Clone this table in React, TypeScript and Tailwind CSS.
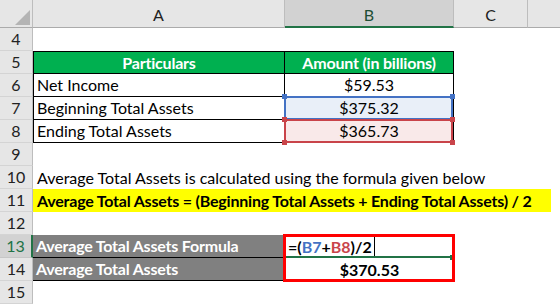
const font = "font-['Lato','Liberation_Sans',sans-serif]"

const RowHead = ({ n, active = false }: { n: number; active?: boolean }) => (
  <div
    className={`flex h-full w-[33px] shrink-0 items-center justify-center border-b border-r text-[16px] ${
      active
        ? "border-b-[#c6c6c6] border-r-2 border-r-[#217346] bg-[#d2d2d2] text-[#217346]"
        : "border-b-[#d4d4d4] border-r-[#bdbdbd] bg-[#e6e6e6] text-[#222]"
    }`}
  >
    {n}
  </div>
)

const Handle = ({ pos, color }: { pos: string; color: string }) => (
  <span className={`absolute h-[5px] w-[5px] ${pos} ${color}`} />
)

export default function App() {
  return (
    <div className={`h-[305px] w-[560px] overflow-hidden bg-white ${font} text-[16px] text-black`}>
      {/* column headers */}
      <div className="flex h-[28px] bg-[#e6e6e6]">
        <div className="relative w-[33px] shrink-0 border-b border-r border-b-[#ababab] border-r-[#bdbdbd]">
          <svg className="absolute left-[15px] top-[10px]" width="15" height="15" viewBox="0 0 15 15">
            <polygon points="15,0 15,15 0,15" fill="#b4b4b4" />
          </svg>
        </div>
        <div className="flex w-[252px] items-center justify-center border-b border-r border-b-[#ababab] border-r-[#bdbdbd] pt-[3px] text-[#222]">
          A
        </div>
        <div className="flex w-[169px] items-center justify-center border-b-2 border-r border-b-[#217346] border-r-[#bdbdbd] bg-[#d2d2d2] pt-[3px] text-[#1f4e35]">
          B
        </div>
        <div className="flex w-[74px] items-center justify-center border-b border-r border-b-[#ababab] border-r-[#bdbdbd] pt-[3px] text-[#222]">
          C
        </div>
        <div className="flex-1 border-b border-b-[#ababab]" />
      </div>

      {/* row 4 */}
      <div className="flex h-[23px]">
        <RowHead n={4} />
      </div>

      {/* row 5 */}
      <div className="flex h-[23px]">
        <RowHead n={5} />
        <div className="flex w-[252px] items-center justify-center border border-black bg-[#00b050] font-bold tracking-[-0.2px] text-white">
          Particulars
        </div>
        <div className="flex w-[169px] items-center justify-center border-y border-r border-black bg-[#00b050] font-bold tracking-[-0.2px] text-white">
          Amount (in billions)
        </div>
      </div>

      {/* row 6 */}
      <div className="flex h-[23px]">
        <RowHead n={6} />
        <div className="flex w-[252px] items-center border-x border-b border-black pl-[3px]">Net Income</div>
        <div className="flex w-[169px] items-center justify-center border-b border-r border-black">$59.53</div>
      </div>

      {/* row 7 */}
      <div className="flex h-[23px]">
        <RowHead n={7} />
        <div className="flex w-[252px] items-center border-x border-b border-black pl-[3px]">Beginning Total Assets</div>
        <div className="relative flex w-[169px] items-center justify-center border-b border-r border-black bg-[#e9eff8]">
          $375.32
          <div className="absolute -left-px -top-px h-[24px] w-[169px] border-2 border-[#4472c4]" />
          <Handle pos="-left-[3px] -top-[3px]" color="bg-[#4472c4]" />
          <Handle pos="-right-[2px] -top-[3px]" color="bg-[#4472c4]" />
        </div>
      </div>

      {/* row 8 */}
      <div className="flex h-[23px]">
        <RowHead n={8} />
        <div className="flex w-[252px] items-center border-x border-b border-black pl-[3px]">Ending Total Assets</div>
        <div className="relative flex w-[169px] items-center justify-center border-b border-r border-black bg-[#f9e9e9]">
          $365.73
          <div className="absolute -left-px -top-px h-[24px] w-[169px] border-2 border-[#c9444a]" />
          <Handle pos="-left-[3px] -top-[3px]" color="bg-[#c9444a]" />
          <Handle pos="-right-[2px] -top-[3px]" color="bg-[#c9444a]" />
          <Handle pos="-left-[3px] -bottom-[3px]" color="bg-[#c9444a]" />
          <Handle pos="-right-[2px] -bottom-[3px]" color="bg-[#c9444a]" />
        </div>
      </div>

      {/* row 9 */}
      <div className="flex h-[23px]">
        <RowHead n={9} />
      </div>

      {/* row 10 */}
      <div className="flex h-[23px]">
        <RowHead n={10} />
        <div className="flex items-center whitespace-nowrap pl-[4px]">
          Average Total Assets is calculated using the formula given below
        </div>
      </div>

      {/* row 11 */}
      <div className="flex h-[23px]">
        <RowHead n={11} />
        <div className="flex w-[518px] items-center whitespace-nowrap bg-[#ffff00] pl-[4px] font-bold tracking-[-0.2px]">
          Average Total Assets = (Beginning Total Assets + Ending Total Assets) / 2
        </div>
      </div>

      {/* row 12 */}
      <div className="flex h-[23px]">
        <RowHead n={12} />
      </div>

      {/* row 13 */}
      <div className="flex h-[23px]">
        <RowHead n={13} active />
        <div className="flex w-[252px] items-center border-b border-r border-black bg-[#808080] pl-[3px] font-bold tracking-[-0.2px] text-white">
          Average Total Assets Formula
        </div>
        <div className="relative flex w-[169px] items-center pl-[3px] font-bold">
          <span>=(</span>
          <span className="text-[#4472c4]">B7</span>
          <span>+</span>
          <span className="text-[#c9444a]">B8</span>
          <span>)/2</span>
          <span className="ml-[2px] h-[19px] w-px bg-black" />
          <div className="absolute bottom-0 left-0 h-[2px] w-[167px] bg-[#217346]" />
          <div className="absolute -bottom-[2px] right-0 h-[5px] w-[4px] bg-[#217346]" />
          <div className="absolute -left-[2px] -top-px h-[48px] w-[172px] border-[3px] border-[#ff0000]" />
        </div>
      </div>

      {/* row 14 */}
      <div className="flex h-[23px]">
        <RowHead n={14} />
        <div className="flex w-[252px] items-center border-b border-r border-black bg-[#808080] pl-[3px] font-bold tracking-[-0.2px] text-white">
          Average Total Assets
        </div>
        <div className="flex w-[169px] items-center justify-center font-bold">$370.53</div>
      </div>

      {/* row 15 */}
      <div className="flex h-[23px]">
        <RowHead n={15} />
      </div>
    </div>
  )
}
